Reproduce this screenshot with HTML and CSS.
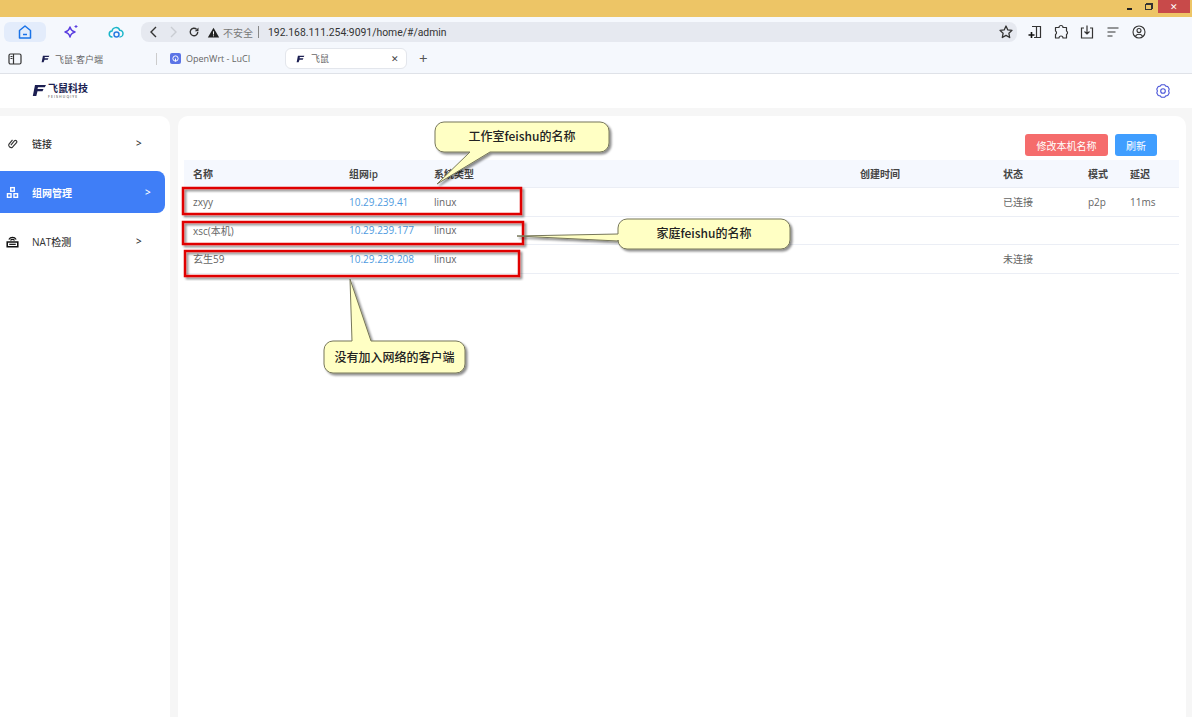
FILE: index.html
```html
<!DOCTYPE html>
<html lang="zh-CN">
<head>
<meta charset="utf-8">
<title>飞鼠</title>
<link rel="stylesheet" href="styles.css">
</head>
<body>
<div class="titlebar">
  <span class="win-btn win-min"></span>
  <span class="win-btn win-restore"></span>
  <span class="win-close">✕</span>
</div>
<div class="toolbar">
  <div class="side-tab side-tab-active">
    <svg class="ic" viewBox="0 0 16 16"><path d="M2.500 6.500 8 2l5.500 4.500V14h-11z" fill="none" stroke="#1a73e8" stroke-width="1.500" stroke-linejoin="round"/><path d="M6 10.500h4" stroke="#1a73e8" stroke-width="1.500"/></svg>
  </div>
  <div class="side-tab">
    <svg class="ic" viewBox="0 0 16 16"><path d="M7 3c.8 3 2 4.200 5 5-3 .8-4.200 2-5 5-.8-3-2-4.200-5-5 3-.8 4.200-2 5-5z" fill="none" stroke="#5b3fe0" stroke-width="1.500" stroke-linejoin="round"/><path d="M13 1v3M11.500 2.500h3" stroke="#5b3fe0"/></svg>
  </div>
  <div class="side-tab">
    <svg class="ic" viewBox="0 0 16 16"><path d="M4.500 13a3 3 0 0 1-.5-6 4 4 0 0 1 7.700-.8A3.400 3.400 0 0 1 11.500 13" fill="none" stroke="#19b5c9" stroke-width="1.500"/><circle cx="8.500" cy="10.500" r="2.500" fill="none" stroke="#2a7de1" stroke-width="1.500"/></svg>
  </div>
  <div class="addressbar">
    <svg class="ic nav" viewBox="0 0 16 16"><path d="M10 3 5 8l5 5" fill="none" stroke="#333" stroke-width="1.400"/></svg>
    <svg class="ic nav" viewBox="0 0 16 16"><path d="m6 3 5 5-5 5" fill="none" stroke="#c9ccd2" stroke-width="1.400"/></svg>
    <svg class="ic nav reload" viewBox="0 0 16 16"><path d="M13 8a5 5 0 1 1-1.600-3.700" fill="none" stroke="#333" stroke-width="1.800"/><path d="M14 2v5H9z" fill="#333"/></svg>
    <svg class="ic warn" viewBox="0 0 16 16"><path d="M8 2 15 14H1z" fill="#222"/><path d="M8 6.500v4M8 11.500v1.200" stroke="#fff" stroke-width="1.200"/></svg>
    <span class="insecure">不安全</span>
    <span class="pipe"></span>
    <span class="url">192.168.111.254:9091/home/#/admin</span>
    <svg class="ic star" viewBox="0 0 16 16"><path d="m8 2 1.800 3.900 4.200.5-3.100 2.900.8 4.200L8 11.400l-3.700 2.100.8-4.200L2 6.400l4.200-.5z" fill="none" stroke="#333" stroke-width="1.300" stroke-linejoin="round"/></svg>
  </div>
  <div class="tools">
    <svg class="ic" viewBox="0 0 16 16"><path d="M5 2.500h8.500v11H7M9.500 2.500v11" fill="none" stroke="#333" stroke-width="1.200"/><path d="M1.500 11h6M4.500 8v6" stroke="#111" stroke-width="1.600"/></svg>
    <svg class="ic" viewBox="0 0 16 16"><path d="M6 3.500a2 2 0 0 1 4 0h3.500V7a2 2 0 0 1 0 3.500v3.500H10a2 2 0 0 0-4 0H2.500v-3.500a2 2 0 0 0 0-3.500V3.500z" fill="none" stroke="#333" stroke-width="1.200" stroke-linejoin="round"/></svg>
    <svg class="ic" viewBox="0 0 16 16"><path d="M5 4H2.500v10h11V4H11M8 1.500v8M5.500 7.500 8 10l2.500-2.500" fill="none" stroke="#333" stroke-width="1.200"/></svg>
    <svg class="ic" viewBox="0 0 16 16"><path d="M2.500 4h11M2.500 8h8M2.500 12h5" stroke="#333" stroke-width="1.200"/></svg>
    <svg class="ic" viewBox="0 0 16 16"><circle cx="8" cy="8" r="6" fill="none" stroke="#333" stroke-width="1.100"/><circle cx="8" cy="6.500" r="2" fill="none" stroke="#333" stroke-width="1.100"/><path d="M4.500 12.500c.8-3 6.200-3 7 0" fill="none" stroke="#333" stroke-width="1.100"/></svg>
  </div>
</div>
<div class="tabstrip">
  <svg class="ic strip-ic" viewBox="0 0 16 16"><rect x="2" y="3" width="12" height="10" rx="1.500" fill="none" stroke="#333" stroke-width="1.200"/><path d="M6.500 3v10" stroke="#333" stroke-width="1.200"/><path d="M3.500 5.500h2M3.500 7.500h2" stroke="#333"/></svg>
  <div class="tab tab-one">
    <svg class="fav" viewBox="0 0 14 12"><path class="logo-mark" d="M3 1h10l-1 2H6L5.500 5h6l-1 2h-5L4 11H1z"/></svg>
    <span>飞鼠-客户端</span>
  </div>
  <span class="tab-sep"></span>
  <div class="tab tab-two">
    <span class="fav-owrt"><svg viewBox="0 0 12 12"><circle cx="6" cy="6" r="3.500" fill="none" stroke="#fff" stroke-width="1.300"/><path d="M6 6v4" stroke="#fff" stroke-width="1.300"/></svg></span>
    <span>OpenWrt - LuCI</span>
  </div>
  <div class="tab tab-active">
    <svg class="fav" viewBox="0 0 14 12"><path class="logo-mark" d="M3 1h10l-1 2H6L5.500 5h6l-1 2h-5L4 11H1z"/></svg>
    <span class="tab-title">飞鼠</span>
    <span class="tab-x">✕</span>
  </div>
  <span class="tab-plus">+</span>
</div>

<header class="apphead">
  <div class="logo">
    <svg class="logo-f" viewBox="0 0 14 12"><path class="logo-mark" d="M3 1h11l-1.200 2.200H6L5.500 5h6l-1 2.200h-5L4.300 12H.8z"/></svg>
    <div class="logo-text">
      <span class="logo-cn">飞鼠科技</span>
      <span class="logo-en">FEISHUQIYE</span>
    </div>
  </div>
  <svg class="gear" viewBox="0 0 16 16"><path d="M6.500 1.700H9.500L10.800 3.150 12.750 3.570 14.200 6.100 13.600 8 14.200 9.900 12.750 12.430 10.800 12.850 9.500 14.300H6.500L5.200 12.850 3.250 12.430 1.800 9.900 2.400 8 1.800 6.100 3.250 3.570 5.200 3.150z" fill="none" stroke="#4a55d8" stroke-width="1.100" stroke-linejoin="round"/><circle cx="8" cy="8" r="2.300" fill="none" stroke="#4a55d8" stroke-width="1.100"/></svg>
</header>

<div class="app">
  <nav class="sidebar">
    <a class="menu">
      <svg class="menu-ic" viewBox="0 0 16 16"><path d="M6 10 10.500 4.500a1.800 1.800 0 0 1 2.700 2.200L8 12.500a3 3 0 0 1-4.500-3.500L8 3.500" fill="none" stroke="#333" stroke-width="1.400"/></svg>
      <span class="menu-label">链接</span>
      <span class="menu-arrow">&gt;</span>
    </a>
    <a class="menu menu-active">
      <svg class="menu-ic" viewBox="0 0 16 16"><g fill="none" stroke="#fff" stroke-width="1.700"><rect x="5.800" y="2" width="4.400" height="4.400"/><rect x="1.800" y="9.500" width="4.400" height="4.400"/><rect x="9.800" y="9.500" width="4.400" height="4.400"/></g></svg>
      <span class="menu-label">组网管理</span>
      <span class="menu-arrow">&gt;</span>
    </a>
    <a class="menu">
      <svg class="menu-ic" viewBox="0 0 16 16"><path d="M1.500 8.500h13v6h-13z" fill="none" stroke="#111" stroke-width="1.900"/><path d="M3.500 5.500c2-3.500 7-3.500 9 0M5.500 6.500c1.200-1.500 3.800-1.500 5 0" fill="none" stroke="#111" stroke-width="1.500"/><path d="M4 11.500h8" stroke="#111" stroke-width="1.500"/></svg>
      <span class="menu-label">NAT检测</span>
      <span class="menu-arrow">&gt;</span>
    </a>
  </nav>
  <main class="card">
    <div class="actions">
      <button class="btn btn-red">修改本机名称</button>
      <button class="btn btn-blue">刷新</button>
    </div>
    <div class="table">
      <div class="row row-head">
        <span>名称</span><span>组网ip</span><span>系统类型</span><span>创建时间</span><span>状态</span><span>模式</span><span>延迟</span>
      </div>
      <div class="row">
        <span>zxyy</span><span class="ip">10.29.239.41</span><span>linux</span><span></span><span>已连接</span><span>p2p</span><span>11ms</span>
      </div>
      <div class="row">
        <span>xsc(本机)</span><span class="ip">10.29.239.177</span><span>linux</span><span></span><span></span><span></span><span></span>
      </div>
      <div class="row">
        <span>玄生59</span><span class="ip">10.29.239.208</span><span>linux</span><span></span><span>未连接</span><span></span><span></span>
      </div>
    </div>
  </main>
</div>

<svg class="notes" viewBox="0 0 1192 717" width="1192" height="717">
  <defs>
    <filter id="sh" x="-10%" y="-10%" width="125%" height="130%"><feDropShadow dx="2" dy="2" stdDeviation="1.200" flood-color="#000" flood-opacity=".45"/></filter>
  </defs>
  <rect class="redbox" x="183" y="188" width="338" height="26"/>
  <rect class="redbox" x="183" y="222" width="340" height="22"/>
  <rect class="redbox" x="185" y="251" width="334" height="25"/>
  <path class="bubble" d="M444 122H600a9 9 0 0 1 9 9V143a9 9 0 0 1-9 9H490L437 184 470 152H444a9 9 0 0 1-9-9V131a9 9 0 0 1 9-9z"/>
  <path class="bubble" d="M627 219H781a9 9 0 0 1 9 9V240a9 9 0 0 1-9 9H627a9 9 0 0 1-9-9V241L517 236 618 234V228a9 9 0 0 1 9-9z"/>
  <path class="bubble" d="M333 341H352L350 279 371 341H456a9 9 0 0 1 9 9V364a9 9 0 0 1-9 9H333a9 9 0 0 1-9-9V350a9 9 0 0 1 9-9z"/>
  <text class="note" x="522" y="140.500">工作室feishu的名称</text>
  <text class="note" x="704" y="237.500">家庭feishu的名称</text>
  <text class="note" x="394.500" y="361.500">没有加入网络的客户端</text>
</svg>
</body>
</html>
```
FILE: styles.css
```css
* { box-sizing: border-box; }
html, body { margin: 0; height: 717px; overflow: hidden; }
body {
  position: relative;
  display: flex;
  flex-direction: column;
  background: #f6f6f6;
  font-family: "Open Sans", "Noto Sans CJK SC", sans-serif;
  color: #333;
}
svg { display: block; flex: none; }
.ic { width: 16px; height: 16px; }

.titlebar {
  height: 17px;
  flex: none;
  background: #edc566;
  display: flex;
  justify-content: flex-end;
  align-items: flex-start;
  padding-right: 2px;
}
.win-btn { display: block; flex: none; }
.win-min { width: 5px; height: 2px; background: #222; margin: 8px 13px 0 0; }
.win-restore { width: 7px; height: 6px; border: 1px solid #333; margin: 4px 6px 0 0; box-shadow: 1px -1px 0 #333; }
.win-close {
  width: 32px;
  height: 13px;
  background: #c84a4a;
  color: #fff;
  font-size: 9px;
  line-height: 13px;
  text-align: center;
}

.toolbar {
  height: 31px;
  flex: none;
  background: #f5f8fd;
  display: flex;
  align-items: flex-start;
  padding: 5px 0 0 4px;
}
.side-tab {
  width: 42px;
  height: 20px;
  margin-right: 3px;
  border-radius: 6px;
  display: flex;
  align-items: center;
  justify-content: center;
}
.side-tab-active { background: #e3ecfb; margin-right: 4px; }
.addressbar {
  width: 876px;
  height: 20px;
  margin-left: 1px;
  background: #e6e9f0;
  border-radius: 8px;
  display: flex;
  align-items: center;
  padding-left: 5px;
}
.nav { margin-right: 3px; }
.reload { width: 12px; height: 12px; margin-left: 4px; }
.warn { width: 13px; height: 13px; margin-left: 4px; }
.insecure { font-size: 10px; color: #777; margin-left: 3px; width: 30px; white-space: nowrap; }
.pipe { width: 1px; height: 12px; background: #888; margin: 0 9px 0 5px; }
.url { font-size: 10.400px; color: #333; font-family: Roboto, sans-serif; }
.star { margin-left: auto; margin-right: 3px; }
.tools { display: flex; gap: 10px; margin-left: 10px; padding-top: 2px; }

.tabstrip {
  height: 26px;
  flex: none;
  background: #f5f8fd;
  border-bottom: 1px solid #dfe2e8;
  display: flex;
  align-items: flex-start;
  font-size: 9px;
  color: #666;
}
.strip-ic { margin: 3px 0 0 7px; }
.tab { display: flex; align-items: center; height: 21px; flex: none; }
.fav { width: 9px; height: 8px; flex: none; }
.logo-mark { fill: #1c1f52; }
.tab-one { width: 115px; margin-left: 18px; gap: 5px; padding-top: 1px; }
.tab-sep { width: 1px; height: 12px; background: #ccc; margin-top: 5px; }
.tab-two { margin-left: 13px; width: 115px; gap: 5px; font-size: 9px; }
.fav-owrt {
  width: 11px;
  height: 11px;
  padding: 1px;
  border-radius: 2px;
  background: #5b74e6;
  display: block;
}
.tab-active {
  width: 122px;
  height: 21px;
  padding: 0 7px 0 10px;
  background: #fff;
  border: 1px solid #e3e6ec;
  border-radius: 6px;
  gap: 6px;
}
.tab-title { flex: 1; }
.tab-x { font-size: 9px; color: #444; }
.tab-plus { font-size: 15px; line-height: 21px; color: #555; margin-left: 12px; }

.apphead {
  height: 34px;
  flex: none;
  background: #fff;
  display: flex;
  align-items: center;
  justify-content: space-between;
  padding: 0 21px 0 32px;
}
.logo { display: flex; gap: 2px; align-items: flex-start; }
.logo-f { width: 14px; height: 12px; margin-top: 1px; }
.logo-text { display: flex; flex-direction: column; align-items: flex-start; }
.logo-cn { font-size: 10px; line-height: 11px; font-weight: 700; color: #1c1f52; }
.logo-en { font-size: 3.500px; line-height: 5px; letter-spacing: 1.100px; color: #333; }
.gear { width: 16px; height: 16px; }

.app { flex: 1; display: flex; padding-top: 8px; gap: 8px; min-height: 0; }
.sidebar {
  width: 170px;
  flex: none;
  background: #fff;
  border-radius: 0 10px 0 0;
  padding: 6px 5px 0 0;
  display: flex;
  flex-direction: column;
  gap: 7px;
}
.menu {
  height: 42px;
  display: flex;
  align-items: center;
  padding-left: 6px;
  font-size: 10px;
  color: #333;
}
.menu-ic { width: 13px; height: 13px; margin-right: 13px; }
.menu-label { width: 104px; font-weight: 500; }
.menu-arrow { font-size: 10px; font-weight: 600; }
.menu-active {
  background: #3f7ef7;
  color: #fff;
  border-radius: 0 8px 8px 0;
  font-weight: 700;
}
.menu-active .menu-label { width: 113px; font-weight: 700; }

.card {
  width: 1008px;
  flex: none;
  background: #fff;
  border-radius: 10px 10px 0 0;
  padding: 18px 7px 0 6px;
}
.actions { display: flex; justify-content: flex-end; gap: 7px; padding-right: 22px; margin-bottom: 4px; }
.btn {
  height: 22px;
  border: 0;
  border-radius: 3px;
  color: #fff;
  font: 10px "Open Sans", "Noto Sans CJK SC", sans-serif;
  padding: 0;
}
.btn-red { width: 83px; background: #f56c6c; }
.btn-blue { width: 42px; background: #409eff; }

.row {
  display: grid;
  grid-template-columns: 156px 85px 426px 143px 85px 42px 1fr;
  align-items: center;
  height: 28.500px;
  padding-left: 9px;
  border-bottom: 1px solid #ebeef5;
  font-size: 10px;
  color: #666;
}
.row-head { height: 28px; background: #f5f8fe; font-weight: 600; color: #444; }
.ip { color: #4f9be0; font-size: 10px; }

.notes { position: absolute; left: 0; top: 0; pointer-events: none; }
.redbox { fill: none; stroke: #e00000; stroke-width: 2.500; filter: url(#sh); }
.bubble { fill: #ffffc4; stroke: #77775a; stroke-width: 1; filter: url(#sh); }
.note {
  font: 500 12px "Noto Sans CJK SC", sans-serif;
  fill: #222;
  text-anchor: middle;
}
```
